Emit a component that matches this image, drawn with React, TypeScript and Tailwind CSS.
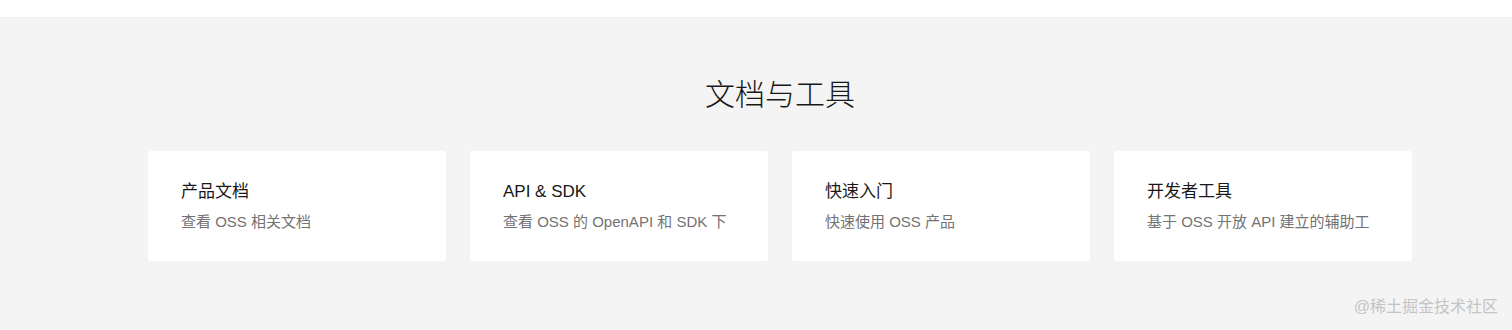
import React from "react";

const cards = [
  { title: "产品文档", desc: "查看 OSS 相关文档" },
  { title: "API & SDK", desc: "查看 OSS 的 OpenAPI 和 SDK 下" },
  { title: "快速入门", desc: "快速使用 OSS 产品" },
  { title: "开发者工具", desc: "基于 OSS 开放 API 建立的辅助工" },
];

const App: React.FC = () => {
  return (
    <div
      className="w-[1512px] h-[330px] overflow-hidden bg-white"
      style={{ fontFamily: '"Liberation Sans", "Noto Sans CJK SC", sans-serif' }}
    >
      <div className="h-[17px] bg-white" />
      <section className="relative h-[313px] bg-[#f4f4f4] border-t border-[#ececec] pt-[56px] pl-[148px]">
        <h2 className="w-[1264px] text-center text-[30px] leading-[42px] font-light text-[#181818]">
          文档与工具
        </h2>
        <div className="mt-[35px] flex gap-[24px]">
          {cards.map((c) => (
            <div
              key={c.title}
              className="w-[298px] h-[110px] bg-white rounded-[2px] pt-[29px] px-[33px]"
            >
              <div className="text-[17px] leading-[24px] text-[#181818]">{c.title}</div>
              <div className="mt-[7px] text-[15px] leading-[22px] text-[#737373] whitespace-nowrap">
                {c.desc}
              </div>
            </div>
          ))}
        </div>
        <div className="absolute right-[14px] bottom-[12px] text-[16px] leading-[22px] text-[#c4c4c4]">
          @稀土掘金技术社区
        </div>
      </section>
    </div>
  );
};

export default App;
